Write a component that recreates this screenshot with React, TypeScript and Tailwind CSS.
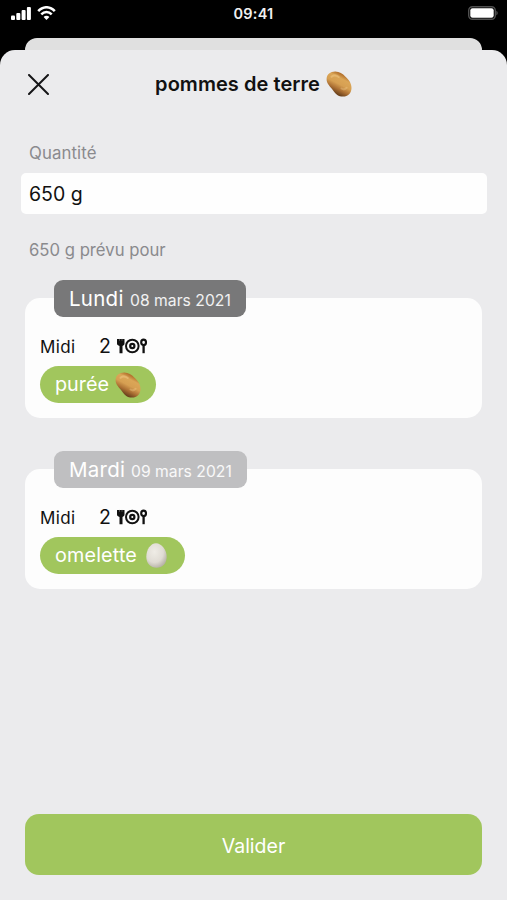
import { useState } from "react";
import clsx from "clsx";

type Food = "potato" | "egg";

interface Meal {
  day: string;
  date: string;
  moment: string;
  guests: number;
  dish: string;
  food: Food;
  past: boolean;
}

const MEALS: Meal[] = [
  { day: "Lundi", date: "08 mars 2021", moment: "Midi", guests: 2, dish: "purée", food: "potato", past: false },
  { day: "Mardi", date: "09 mars 2021", moment: "Midi", guests: 2, dish: "omelette", food: "egg", past: true },
];

function Potato({ id, className }: { id: string; className?: string }) {
  return (
    <svg viewBox="0 0 26 26" className={className} aria-hidden="true">
      <defs>
        <linearGradient id={id} x1="0.68" y1="0.15" x2="0.32" y2="0.85">
          <stop offset="0" stopColor="#b5742f" />
          <stop offset="0.2" stopColor="#dba657" />
          <stop offset="0.5" stopColor="#d69f52" />
          <stop offset="0.75" stopColor="#ac7034" />
          <stop offset="1" stopColor="#6b421d" />
        </linearGradient>
      </defs>
      <path
        d="M.6 8C.8 3.500 4.300.6 9.200.6c4.500 0 7.300 2.200 10.300 5.200 3.600 3.300 6 6.600 6 11.200 0 5.200-3.500 8.600-8.500 8.600-4.500 0-7.400-2.500-9.900-6.200C4.500 15.600.4 12.800.6 8Z"
        fill={`url(#${id})`}
      />
      <path d="M5.500 5.800c2-1.800 5-1.600 7.300.2" stroke="#f3cf8f" strokeWidth="2" strokeLinecap="round" fill="none" opacity="0.45" />
      <path d="M15.500 17.500c1.800 1.200 4 .8 5.200-.8" stroke="#f3cf8f" strokeWidth="2" strokeLinecap="round" fill="none" opacity="0.35" />
    </svg>
  );
}

function Egg({ className }: { className?: string }) {
  return (
    <svg viewBox="0 0 20 24" className={className} aria-hidden="true">
      <defs>
        <radialGradient id="egg" cx="0.4" cy="0.35" r="0.72">
          <stop offset="0" stopColor="#efece6" />
          <stop offset="0.6" stopColor="#e0dcd4" />
          <stop offset="1" stopColor="#b0ab9f" />
        </radialGradient>
      </defs>
      <path d="M9.500.2c5.400 0 10.300 6.600 10.300 13 0 6.300-4 10.600-9.700 10.600S.2 19.700.2 13.200C.2 6.300 4.400.2 9.500.2Z" fill="url(#egg)" />
    </svg>
  );
}

function TableSetting() {
  return (
    <svg viewBox="0 0 30 16" className="-mt-[2px] h-4 w-[30px]" fill="none" stroke="#111" aria-hidden="true">
      <path d="M0 1h7.500v4.600c0 1.400-.9 2-2 2.300V15.200H2.500V7.900C1 7.600 0 7 0 5.600Z" fill="#111" stroke="none" />
      <path d="M2.500.8v2M5 .8v2" stroke="#999" strokeWidth="0.500" />
      <circle cx="15.300" cy="8" r="6.300" strokeWidth="2" />
      <circle cx="15.300" cy="8" r="2.100" strokeWidth="2.200" />
      <ellipse cx="26.600" cy="4.300" rx="2.400" ry="2.700" strokeWidth="2.100" />
      <path d="M26.600 7v8.200" strokeWidth="2.300" />
    </svg>
  );
}

function StatusBar() {
  return (
    <div className="grid h-[38px] grid-cols-3 items-start px-[10px] text-white">
      <div className="flex items-center gap-[6px] pt-[6px]">
        <svg viewBox="0 0 21 14" className="h-[14px] w-[21px]" fill="#fff">
          <rect x="1" y="9.500" width="4" height="4.500" rx="1" />
          <rect x="6.300" y="7" width="4" height="7" rx="1" />
          <rect x="11.600" y="4" width="4" height="10" rx="1" />
          <rect x="16.900" y="1" width="4" height="13" rx="1" />
        </svg>
        <svg viewBox="0 0 19 14" className="h-[14px] w-[19px]" fill="none" stroke="#fff" strokeWidth="2.500">
          <path d="M1.200 5.200C6-.1 13-.1 17.800 5.200" />
          <path d="M4.300 8.300c3-3.200 7.400-3.200 10.400 0" />
          <path d="M9.500 14l-2.900-3c1.600-1.600 4.200-1.600 5.800 0Z" fill="#fff" stroke="none" />
        </svg>
      </div>
      <div className="pt-[4px] text-center text-[14.500px] leading-5 font-semibold tracking-[0.2px] text-[#f0f0f0]">09:41</div>
      <svg viewBox="0 0 30 14" className="mt-[6px] mr-[-1px] h-[14px] w-[30px] justify-self-end">
        <rect x="0.700" y="0.700" width="26.600" height="12.600" rx="3.800" fill="none" stroke="#505050" strokeWidth="1.400" />
        <rect x="2.300" y="2.200" width="23.400" height="9.600" rx="2.200" fill="#fff" />
        <path d="M28.300 4.700c1.900.8 1.900 3.800 0 4.600Z" fill="#505050" />
      </svg>
    </div>
  );
}

function MealCard({ meal }: { meal: Meal }) {
  return (
    <section className="px-[25px]">
      <div
        className={clsx(
          "relative ml-[29px] flex h-[37px] items-baseline rounded-[9px] pl-[15px] text-white",
          meal.past ? "w-[193px] bg-[#bfbfc1]" : "w-[192px] bg-[#787879]"
        )}
      >
        <span
          className={clsx(
            "text-[20.500px] leading-[37px] tracking-[0.25px]",
            meal.past ? "w-[62px]" : "w-[61px]"
          )}
        >
          {meal.day}
        </span>
        <span className="text-[15.700px] tracking-[0.02px] whitespace-nowrap text-white/90">{meal.date}</span>
      </div>
      <div className="-mt-[19px] h-[120px] rounded-[15px] bg-[#fdfdfd] px-[15px] pt-[37px]">
        <div className="flex h-6 items-center text-[#111]">
          <span className="w-[59px] pt-[2px] text-[17px] tracking-[0.35px]">{meal.moment}</span>
          <span className="w-[18px] text-[19.500px]">{meal.guests}</span>
          <TableSetting />
        </div>
        <div className="mt-[7px] inline-flex h-[37px] items-center rounded-full bg-[#a1c65d] pl-[15px] text-[19.800px] text-white">
          <span className={meal.food === "egg" ? "w-[91px] pt-px tracking-[0.15px]" : "w-[60px] pt-px"}>{meal.dish}</span>
          {meal.food === "egg" ? (
            <Egg className="mr-[18px] h-[25px] w-[21px]" />
          ) : (
            <Potato id="potato-meal" className="mr-[15px] h-[26px] w-[26px]" />
          )}
        </div>
      </div>
    </section>
  );
}

export default function App() {
  const [quantity, setQuantity] = useState("650 g");

  return (
    <div className="flex h-screen w-full flex-col overflow-hidden bg-black font-['Inter',sans-serif]">
      <StatusBar />
      <div className="mx-[25px] h-3 shrink-0 rounded-t-[12px] bg-[#e0e0e0]" />
      <main className="flex flex-1 flex-col rounded-t-[15px] bg-[#ebebed]">
        <header className="relative flex h-[68px] items-center justify-center">
          <button className="absolute left-[28px]" aria-label="Fermer">
            <svg viewBox="0 0 21 21" className="h-[21px] w-[21px]" stroke="#151517" strokeWidth="2" strokeLinecap="round">
              <path d="M1 1l19 19M20 1L1 20" />
            </svg>
          </button>
          <h1 className="flex items-center gap-[6px] text-[20px] font-semibold tracking-[0.05px] text-[#111]">
            pommes de terre
            <Potato id="potato-title" className="h-[26px] w-[26px]" />
          </h1>
        </header>

        <label className="mt-[25px] ml-[29px] text-[16.800px] leading-5 tracking-[0.1px] text-[#8a8a8d]">Quantité</label>
        <input
          value={quantity}
          onChange={(e) => setQuantity(e.target.value)}
          className="mr-[20px] ml-[21px] mt-[10px] h-[41px] rounded-[5px] bg-[#fefefe] px-[8px] pt-px text-[19.500px] text-[#111] outline-none"
        />
        <p className="mt-[26px] ml-[29px] text-[16.700px] leading-5 text-[#8a8a8d]">650 g prévu pour</p>

        <div className="mt-[20px] flex flex-col gap-[33px]">
          {MEALS.map((m) => (
            <MealCard key={m.day} meal={m} />
          ))}
        </div>

        <button className="mx-[25px] mt-auto mb-[25px] h-[61px] rounded-[14px] bg-[#a1c65d] pt-[4px] text-[19.500px] text-white">
          Valider
        </button>
      </main>
    </div>
  );
}
